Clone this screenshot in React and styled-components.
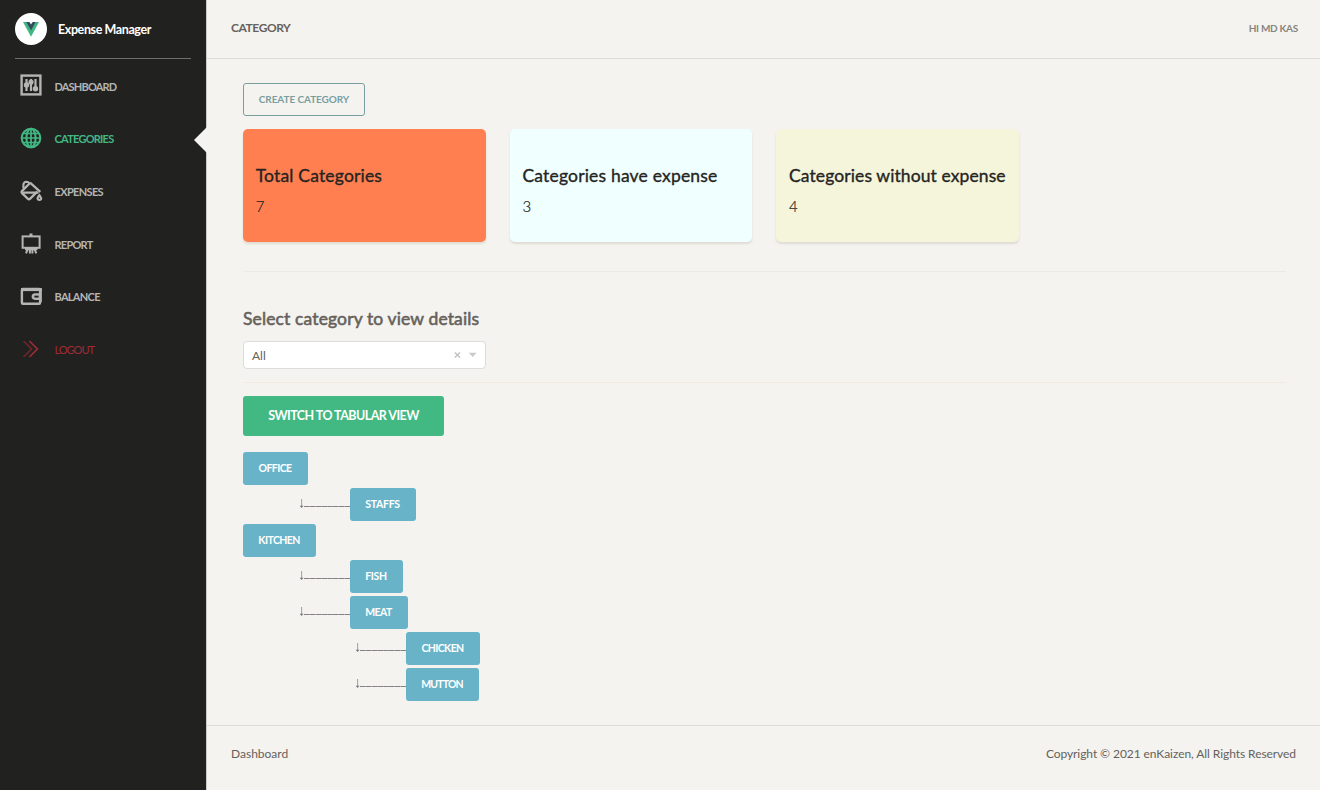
import React from "react";
import styled, { createGlobalStyle, css } from "styled-components";

const GlobalStyle = createGlobalStyle`
  *, *::before, *::after { box-sizing: border-box; }
  body {
    margin: 0;
    background: #f4f3ef;
    color: #66615b;
    font-family: Lato, "Liberation Sans", sans-serif;
    font-size: 12px;
  }
  button { font-family: inherit; margin: 0; cursor: pointer; }
`;

const Shell = styled.div`
  display: flex;
  width: 100%;
  height: 790px;
  overflow: hidden;
`;

const Label = styled.span`
  display: block;
  white-space: nowrap;
  letter-spacing: ${(p) => p.$ls || 0}px;
`;

/* Sidebar */
const Sidebar = styled.aside`
  flex: none;
  width: 207px;
  background: #212120;
  border-right: 1px solid #cccac5;
`;

const Brand = styled.div`
  display: flex;
  align-items: center;
  gap: 11px;
  height: 59px;
  margin: 0 15px;
  border-bottom: 1px solid #706f6d;
  color: #fff;
  font-size: 12.5px;
  font-weight: 700;
`;

const Badge = styled.div`
  display: grid;
  place-items: center;
  width: 32px;
  height: 32px;
  border-radius: 50%;
  background: #fff;
`;

const Nav = styled.nav`
  display: flex;
  flex-direction: column;
`;

const navTones = {
  normal: css`color: #b5b5b3; font-weight: 700;`,
  active: css`color: #41b883; font-weight: 700;`,
  danger: css`color: #a02b35; font-weight: 400;`,
};

const NavItem = styled.a`
  position: relative;
  display: flex;
  align-items: center;
  gap: 11.5px;
  height: 52.7px;
  padding: 0 0 0 19px;
  font-size: 11px;
  ${(p) => navTones[p.$tone]}
  svg { flex: none; }
  span { padding-top: 1.4px; }
`;

const Pointer = styled.i`
  position: absolute;
  right: -1px;
  top: 15.6px;
  border: 13.5px solid transparent;
  border-left: 0;
  border-right: 13px solid #f4f3ef;
`;

/* Main panel */
const Main = styled.div`
  flex: 1;
  display: flex;
  flex-direction: column;
  min-width: 0;
`;

const Header = styled.header`
  display: flex;
  justify-content: space-between;
  align-items: center;
  height: 59px;
  padding: 0 22px 3px 24px;
  border-bottom: 1px solid #dddcd8;
`;

const PageName = styled.h1`
  margin: 0;
  font-size: 12px;
  font-weight: 700;
`;

const Greeting = styled.div`
  padding-top: 1px;
  font-size: 10px;
  font-weight: 700;
  color: #888580;
`;

const Content = styled.main`
  flex: 1;
  display: flex;
  flex-direction: column;
  align-items: flex-start;
  padding: 24px 34px 0 36px;
`;

const OutlineButton = styled.button`
  width: 122px;
  height: 33px;
  padding: 0 0 1px;
  display: grid;
  place-items: center;
  border: 1px solid #7a9e9f;
  border-radius: 3px;
  background: transparent;
  color: #7a9e9f;
  font-size: 10px;
  font-weight: 700;
`;

const Cards = styled.div`
  display: flex;
  gap: 24px;
  margin-top: 13px;
`;

const Card = styled.section`
  width: 242.7px;
  height: 113px;
  padding: 36px 0 0 12.7px;
  border-radius: 5px;
  background: ${(p) => p.$bg};
  color: #252422;
  box-shadow: 0 2px 2px rgba(204, 197, 185, 0.5);
`;

const CardTitle = styled.h2`
  margin: 0;
  font-size: 17.5px;
  line-height: 22px;
  font-weight: 400;
  -webkit-text-stroke: 0.35px currentColor;
`;

const CardValue = styled.p`
  margin: 9px 0 0;
  font-size: 15px;
  line-height: 20px;
  font-weight: 300;
  -webkit-text-stroke: 0.2px currentColor;
`;

const Divider = styled.hr`
  width: 100%;
  height: 1px;
  margin: ${(p) => p.$m};
  border: 0;
  background: ${(p) => p.$c};
`;

const Heading = styled.h2`
  margin: 0;
  font-size: 17.5px;
  line-height: 24px;
  font-weight: 400;
  -webkit-text-stroke: 0.55px currentColor;
`;

const Select = styled.div`
  display: flex;
  align-items: center;
  width: 243px;
  height: 28px;
  margin-top: 10px;
  padding: 0 6px 0 8px;
  border: 1px solid #dddbdc;
  border-radius: 4px;
  background: #fff;
  svg { margin-left: auto; }
`;

const SwitchButton = styled.button`
  display: grid;
  place-items: center;
  width: 201px;
  height: 40px;
  padding: 0 0 1px;
  border: 0;
  border-radius: 3px;
  background: #42b883;
  color: #fff;
  font-size: 12.5px;
  font-weight: 700;
`;

const Tree = styled.div`
  display: flex;
  flex-direction: column;
  gap: 3px;
  margin-top: 16px;
`;

const Branch = styled.div`
  display: flex;
  align-items: center;
  height: 33px;
  padding-left: ${(p) => (p.$depth ? p.$depth * 56 : 0)}px;
`;

const Node = styled.button`
  display: grid;
  place-items: center;
  width: ${(p) => p.$w}px;
  height: 33px;
  padding: 0 1px 1px 0;
  border: 0;
  border-radius: 3px;
  background: #68b3c8;
  color: #fff;
  font-size: 10.5px;
  font-weight: 700;
`;

const Footer = styled.footer`
  display: flex;
  justify-content: space-between;
  align-items: center;
  height: 65px;
  padding: 0 24px 9px;
  border-top: 1px solid #dddcd8;
`;

/* Icons */
const VueLogo = () => (
  <svg width="16" height="15" viewBox="0 0 16 15">
    <path d="M0 0H16L8 14.8Z" fill="#41b883" />
    <path d="M3.4 0H12.6L8 8.6Z" fill="#35495e" />
    <path d="M6.4 0H9.6L8 2.6Z" fill="#fff" />
  </svg>
);

const Icon = ({ children, width = 2 }) => (
  <svg width="24" height="24" viewBox="0 0 24 24" fill="none" stroke="currentColor" strokeWidth={width}>
    {children}
  </svg>
);

const SlidersIcon = () => (
  <Icon>
    <rect x="2.6" y="2.6" width="18.8" height="18.8" strokeWidth="2.4" />
    <path d="M7.5 6V18M12 6V18M16.5 6V18" strokeWidth="2.2" />
    <g fill="currentColor" stroke="none">
      <circle cx="7.5" cy="12" r="2.7" />
      <circle cx="12" cy="9" r="2.6" />
      <circle cx="16.5" cy="15.8" r="2.7" />
    </g>
  </Icon>
);

const GlobeIcon = () => (
  <Icon width={2.1}>
    <circle cx="12" cy="12" r="9.3" />
    <ellipse cx="12" cy="12" rx="4.6" ry="9.3" />
    <path d="M12 2.6V21.4M2.6 12H21.4M4.5 7.5H19.5M4.5 16.5H19.5" strokeWidth="1.7" />
  </Icon>
);

const BucketIcon = () => (
  <Icon width={2.3}>
    <path d="M11 3.6L21.3 12.8M18.2 12.6L11.2 19.6Q10 20.8 8.7 19.6L3 14.2Q2 13.2 2.9 12.1L10.8 4.2" strokeLinejoin="round" />
    <path d="M4 13.6H19.5M4.4 9.6V5.8Q4.6 3 7.4 2.8Q9.4 2.8 10.4 4.4" strokeWidth="2.1" />
    <path d="M20.4 14.6Q23.2 17.9 23.2 19.3A2.8 2.7 0 0 1 17.6 19.3Q17.6 17.9 20.4 14.6Z" fill="currentColor" stroke="none" />
    <circle cx="20.4" cy="19.2" r=".7" fill="#212120" stroke="none" />
  </Icon>
);

const BoardIcon = () => (
  <Icon>
    <rect x="3.6" y="5.4" width="17" height="11.4" />
    <path d="M12 2.4V5.4M6 17.8H18.4" strokeWidth="3" />
    <path d="M8.5 18.6L7 22.4M10.9 19V22.6M13.4 19V22.6M15.8 18.6L17.3 22.4" strokeWidth="2" />
  </Icon>
);

const WalletIcon = () => (
  <Icon width={2.4}>
    <rect x="2.9" y="5" width="18.2" height="14.8" rx="1" />
    <path d="M2 5.6H23" strokeWidth="3" />
    <path d="M22.8 5V18H20.4V16H16Q12.6 15.8 12.6 12.6T16 9.2H20V5Z" fill="currentColor" stroke="none" />
    <path d="M15.4 12.6H19.6" stroke="#212120" strokeWidth="1.9" />
  </Icon>
);

const LogoutIcon = () => (
  <Icon width={1.7}>
    <path d="M4.5 4L12.6 12L4.5 20" opacity=".6" />
    <path d="M10.4 4L18.4 12L10.4 20" />
  </Icon>
);

const SelectMarks = () => (
  <svg width="26" height="10" viewBox="0 0 26 10">
    <path d="M1.8 2.4L7 7.6M7 2.4L1.8 7.6" stroke="#c2c2c2" strokeWidth="1.4" />
    <path d="M15.8 2.8H23.6L19.7 7Z" fill="#c9c9c9" />
  </svg>
);

const TreeLink = () => (
  <svg width="51" height="13" viewBox="0 0 51 13">
    <path d="M2.6 1V9" stroke="#aaa69f" strokeWidth="1.1" />
    <path d="M.7 7.8L2.6 10L4.5 7.8Z" fill="#77727b" />
    <path d="M5 8.5H51" stroke="#85808a" strokeWidth="1" strokeDasharray="5.6 .2" />
  </svg>
);

const navItems = [
  { text: "DASHBOARD", icon: SlidersIcon, tone: "normal", ls: -0.82 },
  { text: "CATEGORIES", icon: GlobeIcon, tone: "active", ls: -0.75 },
  { text: "EXPENSES", icon: BucketIcon, tone: "normal", ls: -0.65 },
  { text: "REPORT", icon: BoardIcon, tone: "normal", ls: -0.75 },
  { text: "BALANCE", icon: WalletIcon, tone: "normal", ls: -0.7 },
  { text: "LOGOUT", icon: LogoutIcon, tone: "danger", ls: -1 },
];

const cards = [
  { title: "Total Categories", value: 7, bg: "#ff7f50", ls: 0.18 },
  { title: "Categories have expense", value: 3, bg: "#f0ffff", ls: 0.19 },
  { title: "Categories without expense", value: 4, bg: "#f5f5dc", ls: 0.1 },
];

const nodes = [
  { text: "OFFICE", depth: 0, w: 65, ls: -0.6 },
  { text: "STAFFS", depth: 1, w: 66, ls: -0.3 },
  { text: "KITCHEN", depth: 0, w: 73, ls: -0.6 },
  { text: "FISH", depth: 1, w: 53, ls: -0.35 },
  { text: "MEAT", depth: 1, w: 58, ls: -0.6 },
  { text: "CHICKEN", depth: 2, w: 74, ls: -0.6 },
  { text: "MUTTON", depth: 2, w: 73, ls: -0.85 },
];

export default function App() {
  return (
    <>
      <GlobalStyle />
      <Shell>
        <Sidebar>
          <Brand>
            <Badge><VueLogo /></Badge>
            <Label $ls={-0.4}>Expense Manager</Label>
          </Brand>
          <Nav>
            {navItems.map(({ text, icon: Glyph, tone, ls }) => (
              <NavItem key={text} $tone={tone}>
                <Glyph />
                <Label $ls={ls}>{text}</Label>
                {tone === "active" && <Pointer />}
              </NavItem>
            ))}
          </Nav>
        </Sidebar>
        <Main>
          <Header>
            <PageName><Label $ls={-0.42}>CATEGORY</Label></PageName>
            <Greeting><Label $ls={-0.28}>HI MD KAS</Label></Greeting>
          </Header>
          <Content>
            <OutlineButton><Label $ls={-0.08}>CREATE CATEGORY</Label></OutlineButton>
            <Cards>
              {cards.map((c) => (
                <Card key={c.title} $bg={c.bg}>
                  <CardTitle><Label $ls={c.ls}>{c.title}</Label></CardTitle>
                  <CardValue>{c.value}</CardValue>
                </Card>
              ))}
            </Cards>
            <Divider $m="29px 0 35px" $c="#ebeae6" />
            <Heading><Label $ls={0.13}>Select category to view details</Label></Heading>
            <Select>
              <Label>All</Label>
              <SelectMarks />
            </Select>
            <Divider $m="13px 0" $c="#f3e9dd" />
            <SwitchButton><Label $ls={-0.55}>SWITCH TO TABULAR VIEW</Label></SwitchButton>
            <Tree>
              {nodes.map((n) => (
                <Branch key={n.text} $depth={n.depth}>
                  {n.depth > 0 && <TreeLink />}
                  <Node $w={n.w}><Label $ls={n.ls}>{n.text}</Label></Node>
                </Branch>
              ))}
            </Tree>
          </Content>
          <Footer>
            <Label>Dashboard</Label>
            <Label $ls={-0.07}>Copyright © 2021 enKaizen, All Rights Reserved</Label>
          </Footer>
        </Main>
      </Shell>
    </>
  );
}
